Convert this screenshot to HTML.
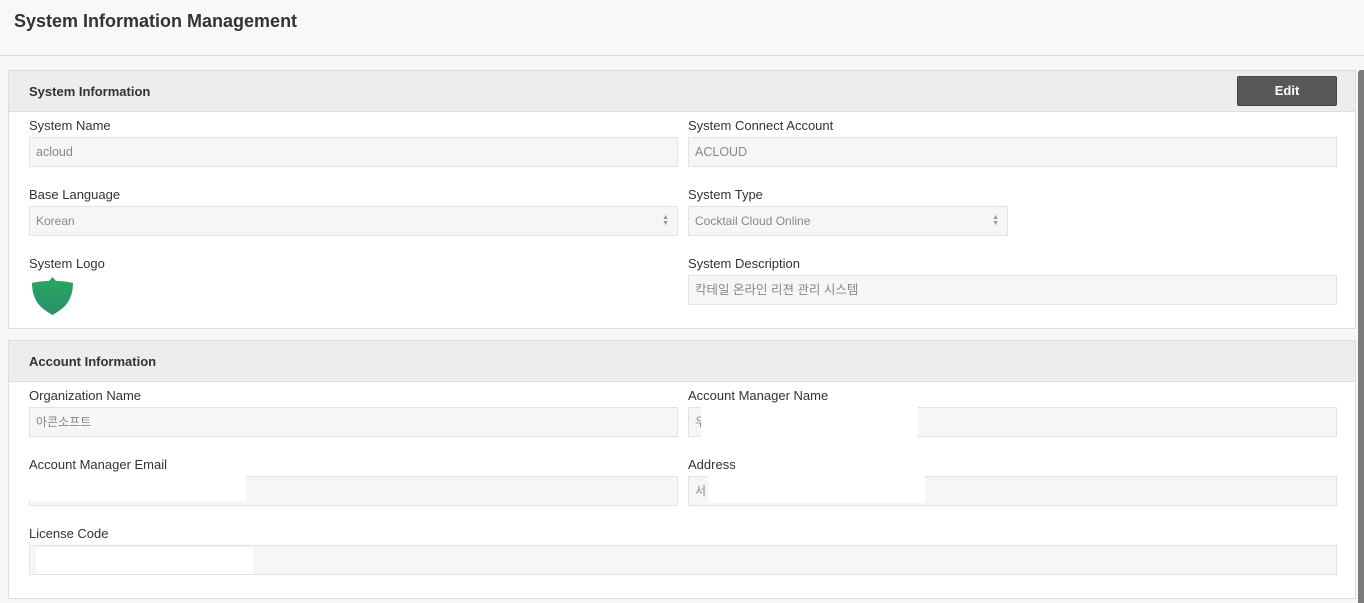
<!DOCTYPE html>
<html><head><meta charset="utf-8"><style>
*{box-sizing:border-box;margin:0;padding:0}
body{width:1364px;height:603px;background:#f7f7f7;font-family:"Liberation Sans","Noto Sans CJK KR",sans-serif;position:relative;overflow:hidden;color:#333}
.a{position:absolute}
.top{left:0;top:0;width:1364px;height:56px;background:#f8f8f8;border-bottom:1px solid #ddd}
.title{left:14px;top:11px;font-size:18px;font-weight:bold;color:#333}
.panel{left:8px;width:1348px;background:#fff;border:1px solid #ddd}
.ph{left:0;top:0;width:1346px;height:41px;background:#ededed;border-bottom:1px solid #ddd}
.pt{font-size:13px;font-weight:bold;color:#333;left:20px;top:13px}
.lbl{font-size:13px;color:#333}
.in{height:30px;background:#f6f6f6;border:1px solid #e3e3e3;font-size:12.5px;color:#888;padding:0 6px;line-height:28px}
.w{background:#fff}
.arr{position:absolute;right:8px;top:8px;font-size:7px;line-height:6px;color:#999;text-align:center}
</style></head><body>
<div class="a top"></div>
<div class="a title">System Information Management</div>
<div class="a" style="left:1358px;top:70px;width:6px;height:533px;background:#7b7b7b;border-radius:3px 0 0 0"></div>

<div class="a panel" style="top:70px;height:259px">
 <div class="a ph"></div><div class="a pt">System Information</div>
 <div class="a" style="left:1228px;top:5px;width:100px;height:30px;background:#585858;border:1px solid #444;border-radius:2px;color:#fff;font-size:13px;font-weight:bold;text-align:center;line-height:28px">Edit</div>
</div>
<div class="a panel" style="top:340px;height:259px">
 <div class="a ph"></div><div class="a pt">Account Information</div>
</div>

<div class="a lbl" style="left:29px;top:118px">System Name</div>
<div class="a in" style="left:29px;top:137px;width:649px">acloud</div>
<div class="a lbl" style="left:688px;top:118px">System Connect Account</div>
<div class="a in" style="left:688px;top:137px;width:649px">ACLOUD</div>

<div class="a lbl" style="left:29px;top:187px">Base Language</div>
<div class="a in" style="left:29px;top:206px;width:649px;font-size:12px">Korean<div class="arr">▲<br>▼</div></div>
<div class="a lbl" style="left:688px;top:187px">System Type</div>
<div class="a in" style="left:688px;top:206px;width:320px;font-size:12px">Cocktail Cloud Online<div class="arr">▲<br>▼</div></div>

<div class="a lbl" style="left:29px;top:256px">System Logo</div>
<svg class="a" style="left:31px;top:276px" width="43" height="40" viewBox="0 0 43 40"><defs><linearGradient id="g" x1="0" y1="0" x2="0" y2="1"><stop offset="0" stop-color="#27a862"/><stop offset="1" stop-color="#2a8f6a"/></linearGradient></defs><path d="M21.5 1 L25 5 Q34 5 42 7 Q42 22 33 31 Q27 36 21.5 39 Q16 36 10 31 Q1 22 1 7 Q9 5 18 5 Z" fill="url(#g)"/></svg>
<div class="a lbl" style="left:688px;top:256px">System Description</div>
<div class="a in" style="left:688px;top:275px;width:649px">칵테일 온라인 리젼 관리 시스템</div>

<div class="a lbl" style="left:29px;top:388px">Organization Name</div>
<div class="a in" style="left:29px;top:407px;width:649px;font-size:12px">아콘소프트</div>
<div class="a lbl" style="left:688px;top:388px">Account Manager Name</div>
<div class="a in" style="left:688px;top:407px;width:649px;font-size:12px">우</div>
<div class="a w" style="left:701px;top:407px;width:217px;height:30px"></div>

<div class="a lbl" style="left:29px;top:457px">Account Manager Email</div>
<div class="a in" style="left:29px;top:476px;width:649px"></div>
<div class="a w" style="left:29px;top:476px;width:217px;height:25px"></div>
<div class="a lbl" style="left:688px;top:457px">Address</div>
<div class="a in" style="left:688px;top:476px;width:649px;font-size:12px">서</div>
<div class="a w" style="left:708px;top:476px;width:217px;height:27px"></div>

<div class="a lbl" style="left:29px;top:526px">License Code</div>
<div class="a in" style="left:29px;top:545px;width:1308px"></div>
<div class="a w" style="left:36px;top:547px;width:217px;height:27px"></div>
</body></html>
